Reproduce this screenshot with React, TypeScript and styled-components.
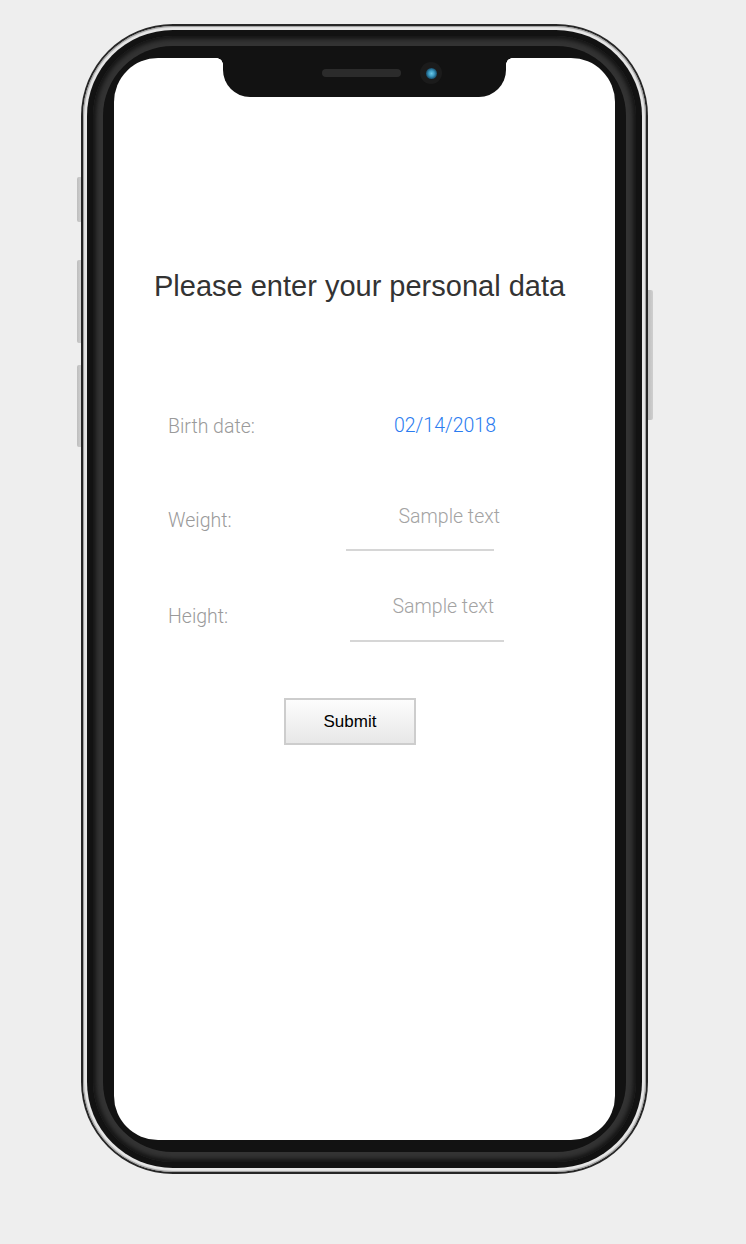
import React from "react";
import styled, { createGlobalStyle } from "styled-components";

const Global = createGlobalStyle`
  html, body { margin: 0; padding: 0; background: #eeeeee; }
  body { font-family: "Liberation Sans", Arial, sans-serif; }
  * { box-sizing: border-box; }
`;

const Page = styled.div`
  width: 746px;
  height: 1244px;
  padding: 24px 0 0 81px;
  background: #eeeeee;
`;

const Phone = styled.div`
  position: relative;
  width: 567px;
  height: 1150px;
  border-radius: 92px;
  background: #262626;
  padding: 2px;
  display: flex;
`;

const SideButton = styled.div<{ $side: "left" | "right"; $top: number; $height: number }>`
  position: absolute;
  top: ${(p) => p.$top}px;
  ${(p) => (p.$side === "left" ? "left: -4px;" : "right: -5px;")}
  width: ${(p) => (p.$side === "left" ? 4 : 5)}px;
  height: ${(p) => p.$height}px;
  background: linear-gradient(90deg, #bdbdbd, #cfcfcf);
  border-radius: ${(p) => (p.$side === "left" ? "2px 0 0 2px" : "0 2px 2px 0")};
`;

const Rim = styled.div`
  flex: 1;
  display: flex;
  border-radius: 90px;
  background: #e6e6e6;
  box-shadow: inset 0 0 1px 1px #9a9a9a;
  padding: 4px;
`;

const Bezel = styled.div`
  flex: 1;
  display: flex;
  border-radius: 86px;
  background: #121212;
  padding: 6px;
`;

const Band = styled.div`
  flex: 1;
  display: flex;
  border-radius: 80px;
  background: #333333;
  box-shadow: inset 0 0 4px 3px #141414;
  padding: 10px;
`;

const InnerBezel = styled.div`
  flex: 1;
  display: flex;
  border-radius: 70px;
  background: #121212;
  padding: 12px 11px;
`;

const Screen = styled.div`
  position: relative;
  flex: 1;
  background: #ffffff;
  border-radius: 44px;
  overflow: hidden;
`;

const Notch = styled.div`
  position: absolute;
  top: 0;
  left: 109px;
  width: 283px;
  height: 39px;
  background: #121212;
  border-radius: 0 0 27px 27px;
  display: flex;
  align-items: center;
  padding: 0 0 9px 99px;
  gap: 19px;

  &::before,
  &::after {
    content: "";
    position: absolute;
    top: 0;
    width: 6px;
    height: 6px;
  }
  &::before {
    left: -6px;
    background: radial-gradient(circle at 0 100%, transparent 5.5px, #121212 6px);
  }
  &::after {
    right: -6px;
    background: radial-gradient(circle at 100% 100%, transparent 5.5px, #121212 6px);
  }
`;

const Speaker = styled.div`
  width: 79px;
  height: 8px;
  border-radius: 4px;
  background: #2b2b2b;
`;

const Camera = styled.div`
  width: 22px;
  height: 22px;
  border-radius: 50%;
  background: #1b1b1b;
  display: flex;
  align-items: center;
  justify-content: center;
`;

const Lens = styled.div`
  width: 11px;
  height: 11px;
  border-radius: 50%;
  background: radial-gradient(circle at 50% 50%, #6cc8e6 0, #3d9cc4 35%, #1d5a7a 65%, #0d2230 100%);
`;

const Content = styled.div`
  padding: 211px 0 0 40px;
  display: flex;
  flex-direction: column;
`;

const Heading = styled.h1`
  margin: 0;
  font-family: "Liberation Sans", Arial, sans-serif;
  font-weight: 400;
  font-size: 29px;
  line-height: 34px;
  color: #333333;
`;

const Form = styled.div`
  margin-top: 111px;
  padding-left: 14px;
  display: flex;
  flex-direction: column;
`;

const Row = styled.div<{ $gap: number }>`
  display: flex;
  align-items: flex-start;
  margin-top: ${(p) => p.$gap}px;
`;

const Label = styled.div<{ $drop: number }>`
  width: 178px;
  flex: none;
  margin-top: ${(p) => p.$drop}px;
  font-family: Roboto, "Noto Sans", sans-serif;
  font-weight: 300;
  font-size: 19.5px;
  line-height: 24px;
  color: #9a9a9a;
`;

const DateValue = styled.div`
  width: 150px;
  text-align: right;
  font-family: Roboto, "Noto Sans", sans-serif;
  font-weight: 300;
  font-size: 19.5px;
  line-height: 24px;
  color: #2b7cf0;
`;

const Field = styled.div<{ $offset: number; $width: number; $pad: number }>`
  margin-left: ${(p) => p.$offset}px;
  width: ${(p) => p.$width}px;
  display: flex;
  justify-content: flex-end;
  padding-bottom: ${(p) => p.$pad}px;
  border-bottom: 2px solid #d6d6d6;
`;

const FieldText = styled.span<{ $inset: number }>`
  margin-right: ${(p) => p.$inset}px;
  white-space: nowrap;
  font-family: Roboto, "Noto Sans", sans-serif;
  font-weight: 300;
  font-size: 19.5px;
  line-height: 24px;
  color: #a3a3a3;
`;

const SubmitButton = styled.button`
  margin: 56px 0 0 116px;
  width: 132px;
  height: 47px;
  border: 2px solid #cdcdcd;
  background: linear-gradient(180deg, #fdfdfd 0%, #e7e7e7 100%);
  font-family: "Liberation Sans", Arial, sans-serif;
  font-size: 17px;
  color: #000;
  padding: 0;
  cursor: pointer;
`;

export default function App() {
  return (
    <>
      <Global />
      <Page>
        <Phone>
          <SideButton $side="left" $top={153} $height={45} />
          <SideButton $side="left" $top={236} $height={83} />
          <SideButton $side="left" $top={341} $height={82} />
          <SideButton $side="right" $top={266} $height={130} />
          <Rim>
            <Bezel>
              <Band>
                <InnerBezel>
                  <Screen>
                    <Notch>
                      <Speaker />
                      <Camera>
                        <Lens />
                      </Camera>
                    </Notch>
                    <Content>
                      <Heading>Please enter your personal data</Heading>
                      <Form>
                        <Row $gap={0}>
                          <Label $drop={1}>Birth date:</Label>
                          <DateValue>02/14/2018</DateValue>
                        </Row>
                        <Row $gap={66}>
                          <Label $drop={4}>Weight:</Label>
                          <Field $offset={0} $width={148} $pad={20}>
                            <FieldText $inset={-6}>Sample text</FieldText>
                          </Field>
                        </Row>
                        <Row $gap={44}>
                          <Label $drop={10}>Height:</Label>
                          <Field $offset={4} $width={154} $pad={21}>
                            <FieldText $inset={10}>Sample text</FieldText>
                          </Field>
                        </Row>
                        <SubmitButton type="button">Submit</SubmitButton>
                      </Form>
                    </Content>
                  </Screen>
                </InnerBezel>
              </Band>
            </Bezel>
          </Rim>
        </Phone>
      </Page>
    </>
  );
}
